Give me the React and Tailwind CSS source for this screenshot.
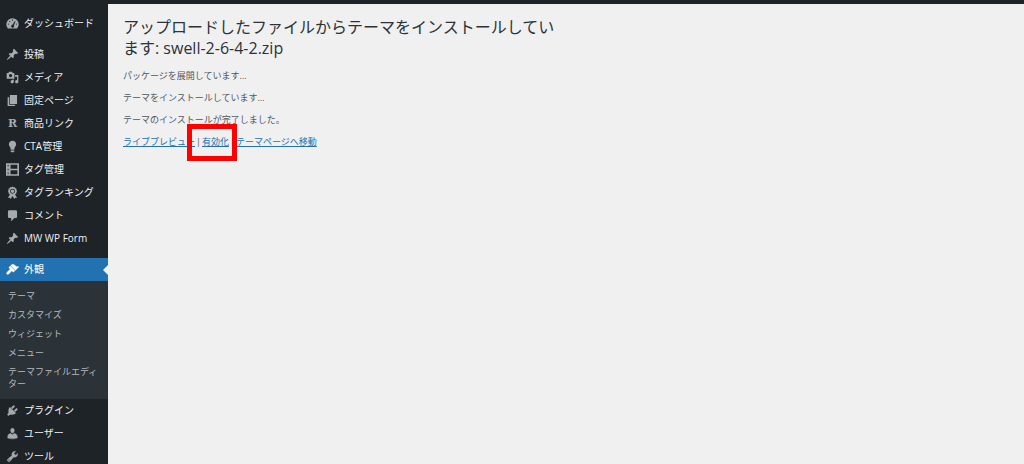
import clsx from 'clsx';

const Icon = ({ children }) => (
  <svg viewBox="0 0 20 20" className="size-[13px] shrink-0" fill="currentColor" fillRule="evenodd" aria-hidden="true">
    {children}
  </svg>
);

const PinIcon = () => (
  <Icon>
    <path d="M10.44 3.02l1.82-1.82 6.36 6.35-1.83 1.82c-1.05-.68-2.48-.57-3.41.36l-.75.75c-.92.93-1.04 2.35-.35 3.41l-1.83 1.82-2.41-2.41-2.8 2.79c-.42.42-3.38 2.71-3.8 2.29s1.86-3.39 2.28-3.81l2.79-2.79L4.1 9.36l1.83-1.82c1.05.69 2.48.57 3.4-.36l.75-.75c.93-.92 1.05-2.35.36-3.41z" />
  </Icon>
);

const DashboardIcon = () => (
  <Icon>
    <path d="M3 17.500h14C18.500 16 19.500 13.500 19.500 11.300a9.500 9.500 0 0 0-19 0c0 2.200 1 4.700 2.500 6.200zM9.300 4h1.400v1.800H9.300zM5 6.200h1.500v1.500H5zM3 10.200h1.700v1.500H3zM15.300 10.200H17v1.500h-1.700zM13.800 6.200l.9.600-2.700 6.200a2.200 2.200 0 1 1-2-.9z" />
  </Icon>
);

const MediaIcon = () => (
  <Icon>
    <path d="M13 11V4c0-.55-.45-1-1-1h-1.670L9 1H5L3.670 3H2c-.55 0-1 .45-1 1v7c0 .55.45 1 1 1h10c.55 0 1-.45 1-1zM7 4.500c1.380 0 2.500 1.120 2.500 2.500S8.380 9.500 7 9.500 4.500 8.380 4.500 7 5.620 4.500 7 4.500zM14 6h5v10.500c0 1.380-1.120 2.500-2.500 2.500S14 17.880 14 16.500s1.120-2.500 2.500-2.500c.17 0 .34.02.5.05V9h-3V6zm-4 8.050V13h2v3.500c0 1.380-1.120 2.500-2.500 2.500S7 17.880 7 16.500 8.120 14 9.500 14c.17 0 .34.02.5.05z" />
  </Icon>
);

const PageIcon = () => (
  <Icon>
    <path d="M6 15.500V1.500h11v14H6zm-1 1h9v2H2.500V5H5v11.500z" />
  </Icon>
);

const LetterIcon = () => (
  <span className="w-[13px] shrink-0 text-center font-['DejaVu_Serif',serif] text-[11px] leading-3 font-bold" aria-hidden="true">
    R
  </span>
);

const BulbIcon = () => (
  <Icon>
    <path d="M10 1c3.110 0 5.630 2.520 5.630 5.620 0 1.840-2.030 4.580-2.030 4.580-.33.44-.6 1.250-.6 1.800v1c0 .55-.45 1-1 1H8c-.55 0-1-.45-1-1v-1c0-.55-.27-1.360-.6-1.800 0 0-2.020-2.740-2.020-4.580C4.380 3.520 6.890 1 10 1zM7 16.870V16h6v.870c0 .62-.13 1.130-.75 1.130H12c0 .62-.4 1-1.020 1h-2c-.61 0-.98-.38-.98-1h-.25c-.62 0-.75-.51-.75-1.130z" />
  </Icon>
);

const TagPanelIcon = () => (
  <Icon>
    <path d="M0 .5h20v19H0zM2.500 3v2.500h1.500V3zM2.500 8.700v2.600h1.500V8.700zM2.500 14.500V17h1.500v-2.500zM7 2.800v6h10.500v-6zM7 11.200v6h10.500v-6z" />
  </Icon>
);

const AwardIcon = () => (
  <Icon>
    <path d="M10 .8l1.600 1.100 1.900-.1.900 1.700 1.700.9-.1 1.900L17 8l-1 1.600.1 1.900-1.700.9-.3.600 2.900 5.400-2.800-.4L12.800 20 10 15.200 7.200 20l-1.400-2-2.800.4L5.900 13l-.3-.6-1.700-.9.100-1.900L3 8l1-1.700-.1-1.900 1.700-.9.900-1.700 1.900.1zM10 4.200a3.800 3.800 0 1 0 0 7.600 3.800 3.800 0 0 0 0-7.600zM10 5.300a2.700 2.700 0 1 1 0 5.400 2.700 2.700 0 0 1 0-5.400z" />
  </Icon>
);

const CommentIcon = () => (
  <Icon>
    <path d="M5 2h10c1.100 0 2 .9 2 2v8c0 1.100-.9 2-2 2h-2l-5 5v-5H5c-1.100 0-2-.9-2-2V4c0-1.100.9-2 2-2z" />
  </Icon>
);

const BrushIcon = () => (
  <Icon>
    <path stroke="currentColor" strokeWidth=".8" d="M14.480 11.060L7.410 3.990l1.500-1.500c.5-.56 2.300-.47 3.510.32 1.210.8 1.430 1.280 2.910 2.100 1.180.64 2.450 1.260 4.450.85zm-.71.71L6.700 4.700 4.930 6.470c-.39.39-.39 1.020 0 1.410l1.060 1.060c.39.39.39 1.030 0 1.420-.6.6-1.430 1.110-2.210 1.690-.35.26-.7.53-1.010.84C1.430 14.230.4 16.080 1.400 17.070c.99 1 2.840-.03 4.180-1.360.31-.31.58-.66.85-1.020.57-.78 1.080-1.610 1.690-2.210.39-.39 1.020-.39 1.410 0l1.060 1.060c.39.39 1.020.39 1.410 0z" />
  </Icon>
);

const PluginIcon = () => (
  <Icon>
    <path stroke="currentColor" strokeWidth=".5" d="M13.110 4.360L9.870 7.600 8 5.730l3.240-3.240c.35-.34 1.050-.2 1.560.32.52.51.66 1.210.31 1.550zm-8 1.770l.91-1.120 9.010 9.010-1.190.84c-.71.71-2.630 1.160-3.820 1.160H6.140L4.900 17.260c-.59.59-1.540.59-2.120 0-.59-.58-.59-1.530 0-2.120l1.240-1.240v-3.880c0-1.130.4-3.190 1.090-3.890zm7.260 3.970l3.240-3.240c.34-.35 1.040-.21 1.550.31.52.51.66 1.210.31 1.550l-3.240 3.250z" />
  </Icon>
);

const UserIcon = () => (
  <Icon>
    <path stroke="currentColor" strokeWidth=".8" d="M10 9.250c-2.270 0-2.730-3.440-2.730-3.440C7 4.020 7.820 2 9.970 2c2.160 0 2.980 2.020 2.710 3.810 0 0-.41 3.440-2.680 3.440zm0 2.570L12.720 10c2.390 0 4.520 2.330 4.520 4.530v2.490s-3.650 1.130-7.240 1.130c-3.650 0-7.240-1.130-7.240-1.130v-2.490c0-2.250 1.940-4.480 4.470-4.480z" />
  </Icon>
);

const WrenchIcon = () => (
  <Icon>
    <path stroke="currentColor" strokeWidth=".5" d="M16.680 9.770c-1.340 1.340-3.300 1.670-4.950.99l-5.410 6.520c-.99.99-2.590.99-3.580 0s-.99-2.590 0-3.570l6.520-5.420c-.68-1.650-.35-3.610.99-4.950 1.280-1.280 3.120-1.620 4.720-1.060l-2.890 2.890 2.820 2.820 2.860-2.870c.53 1.580.18 3.390-1.080 4.650zM3.810 16.210c.4.39 1.040.39 1.430 0 .4-.4.4-1.040 0-1.430-.39-.4-1.030-.4-1.430 0-.39.39-.39 1.030 0 1.430z" />
  </Icon>
);

const contentMenu = [
  { label: '投稿', icon: PinIcon },
  { label: 'メディア', icon: MediaIcon },
  { label: '固定ページ', icon: PageIcon },
  { label: '商品リンク', icon: LetterIcon },
  { label: 'CTA管理', icon: BulbIcon },
  { label: 'タグ管理', icon: TagPanelIcon },
  { label: 'タグランキング', icon: AwardIcon },
  { label: 'コメント', icon: CommentIcon },
  { label: 'MW WP Form', icon: PinIcon },
];

const appearanceMenu = ['テーマ', 'カスタマイズ', 'ウィジェット', 'メニュー', 'テーマファイルエディター'];

const systemMenu = [
  { label: 'プラグイン', icon: PluginIcon },
  { label: 'ユーザー', icon: UserIcon },
  { label: 'ツール', icon: WrenchIcon },
];

const MenuItem = ({ label, icon: ItemIcon, active }) => (
  <a
    href="#"
    className={clsx(
      'relative flex h-[23px] items-center gap-[5px] pl-1.5 text-[10px] whitespace-nowrap',
      active ? 'bg-[#2271b1] text-white' : 'text-[#f0f0f1]'
    )}
  >
    <span className={clsx('flex', active ? 'text-white' : 'text-[#a7aaad]')}>
      <ItemIcon />
    </span>
    {label}
    {active && (
      <span className="absolute top-1/2 right-0 -translate-y-1/2 border-y-[5px] border-r-[5px] border-y-transparent border-r-[#f0f0f1]" />
    )}
  </a>
);

const Sidebar = () => (
  <nav className="w-[108px] shrink-0 bg-[#1d2327] pt-2">
    <MenuItem label="ダッシュボード" icon={DashboardIcon} />
    <div className="py-2">
      {contentMenu.map((item) => (
        <MenuItem key={item.label} {...item} />
      ))}
    </div>
    <MenuItem label="外観" icon={BrushIcon} active />
    <ul className="flex flex-col gap-[7px] bg-[#2c3338] px-2 py-[9px] text-[9px] leading-3 text-[#b4b9be]">
      {appearanceMenu.map((label) => (
        <li key={label}>
          <a href="#" className="block">{label}</a>
        </li>
      ))}
    </ul>
    {systemMenu.map((item) => (
      <MenuItem key={item.label} {...item} />
    ))}
  </nav>
);

const App = () => {
  return (
    <div className="flex h-screen flex-col overflow-hidden bg-[#f0f0f1] font-['Open_Sans','Noto_Sans_CJK_JP',sans-serif]">
      <header className="h-1 shrink-0 bg-[#1d2327]" />
      <div className="flex grow">
        <Sidebar />
        <main className="grow px-[15px] pt-[13px] text-[9px] leading-3 text-[#50575e]">
          <h1 className="mb-[11px] max-w-[440px] text-[16px] leading-[21px] text-[#2c3338]">
            アップロードしたファイルからテーマをインストールしています: swell-2-6-4-2.zip
          </h1>
          <div className="flex flex-col gap-2.5">
            <p>パッケージを展開しています…</p>
            <p>テーマをインストールしています…</p>
            <p>テーマのインストールが完了しました。</p>
            <p className="flex gap-px">
              <a href="#" className="text-[#2271b1] underline">ライブプレビュー</a>
              <span>|</span>
              <span className="relative">
                <a href="#" className="text-[#2271b1] underline">有効化</a>
                <span className="pointer-events-none absolute -top-3 -right-2 -bottom-[13px] -left-[15px] border-[5px] border-[#ff0000]" />
              </span>
              <span>|</span>
              <a href="#" className="text-[#2271b1] underline">テーマページへ移動</a>
            </p>
          </div>
        </main>
      </div>
    </div>
  );
};

export default App;
